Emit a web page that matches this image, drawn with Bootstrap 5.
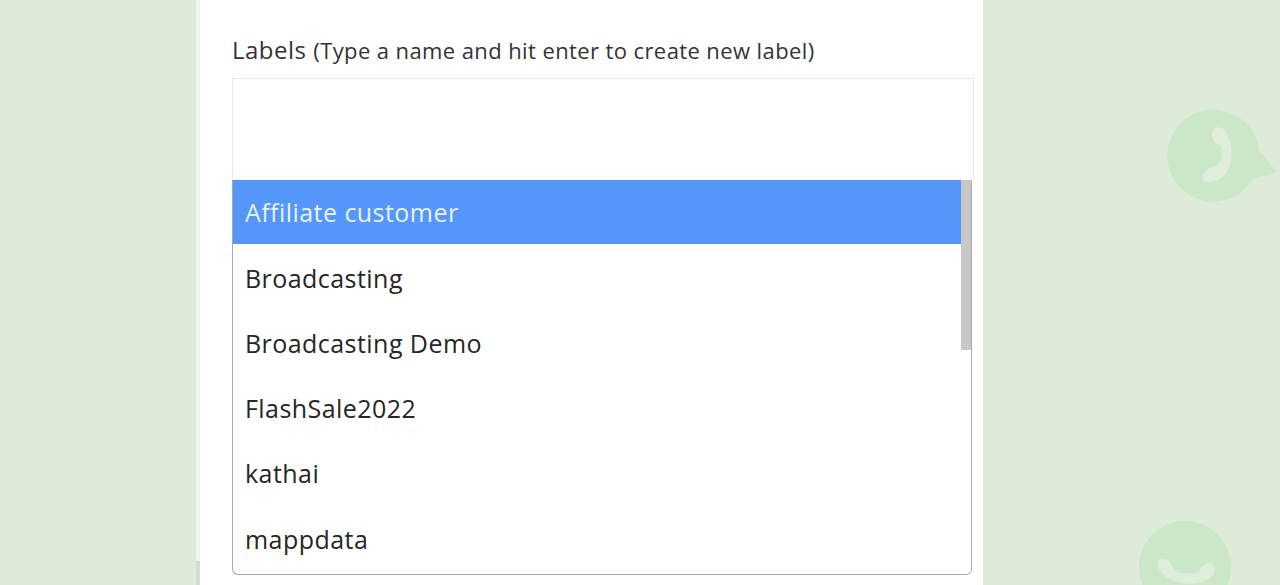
<!DOCTYPE html>
<html lang="en">
<head>
<meta charset="utf-8">
<title>Labels</title>
<link href="https://cdn.jsdelivr.net/npm/bootstrap@5.3.0/dist/css/bootstrap.min.css" rel="stylesheet">
<style>
html, body { height: 585px; overflow: hidden; }
body { background: #ddecd8; font-family: "Open Sans", "Noto Sans", "Liberation Sans", sans-serif; color: #2b2b2b; position: relative; }
.panel-sheet { position: relative; width: 787px; height: 585px; margin-left: 196px; background: #fff; border-left: 4px solid #f3f3f3; padding: 32px 9px 0 32px; }
.panel-sheet::before { content: ""; position: absolute; left: -4px; bottom: 0; width: 4px; height: 24px; background: #d8d8d8; }
.label-title { font-size: 24px; line-height: 36px; margin: 0 0 10px; letter-spacing: .5px; color: #333; display: block; }
.label-title span { font-size: 22px; letter-spacing: .4px; }
.tag-input { height: 102px; border: 1px solid #e8e8e8; border-bottom: 0; border-radius: 0; background: #fff; }
.tag-menu { width: 740px; height: 395px; border: 1px solid #a9a9a9; border-top: 0; border-radius: 0 0 6px 6px; overflow: hidden; }
.tag-list { border-radius: 0; }
.tag-list .list-group-item { height: 65.2px; border: 0; padding: 4px 12px 0; display: flex; align-items: center; font-size: 25px; color: #262626; border-radius: 0; letter-spacing: .45px; }
.tag-list .list-group-item.active { background: #5596fb; color: #e6f3ff; height: 64px; margin: 0; padding-top: 1px; }
.scroll-track { width: 10px; background: #fff; flex: none; }
.scroll-thumb { height: 170px; background: #c8c8c8; }
.bg-bubble { position: absolute; }
</style>
</head>
<body>
<svg class="bg-bubble bubble-one" style="left:1166px;top:107px" width="114" height="96" viewBox="0 0 114 96" aria-hidden="true">
  <path d="M93 43A46 46 0 1 0 87 72L111 65z" fill="#cbe6c9"/>
  <path d="M48 22C51 19 57 20 59 24C65 33 67 44 65 54C63 64 57 72 49 74C44 76 37 75 36 71C36 67 41 62 46 60C50 58 54 56 55 52C56 46 56 42 54 38C50 38 47 33 46 29C46 26 46 24 48 22Z" fill="#deeedb"/>
</svg>
<svg class="bg-bubble bubble-two" style="left:1138px;top:520px" width="96" height="65" viewBox="0 0 96 65" aria-hidden="true">
  <circle cx="47" cy="47" r="46" fill="#cbe6c9"/>
  <path d="M20 42C22 38 27 38 30 41C33 43 35 47 36 51C42 54 52 54 61 52C62 48 65 45 70 43C74 42 77 45 77 50C77 56 70 61 60 63C50 65 38 63 30 58C24 54 18 48 20 42Z" fill="#deeedb"/>
</svg>
<main class="panel-sheet">
  <form>
    <label class="form-label label-title" for="labelInput">Labels <span>(Type a name and hit enter to create new label)</span></label>
    <input id="labelInput" type="text" class="form-control tag-input">
    <div class="tag-menu d-flex">
      <div class="list-group tag-list flex-grow-1">
        <a href="#" class="list-group-item list-group-item-action active">Affiliate customer</a>
        <a href="#" class="list-group-item list-group-item-action">Broadcasting</a>
        <a href="#" class="list-group-item list-group-item-action">Broadcasting Demo</a>
        <a href="#" class="list-group-item list-group-item-action">FlashSale2022</a>
        <a href="#" class="list-group-item list-group-item-action">kathai</a>
        <a href="#" class="list-group-item list-group-item-action">mappdata</a>
      </div>
      <div class="scroll-track"><div class="scroll-thumb"></div></div>
    </div>
  </form>
</main>
<script src="https://cdn.jsdelivr.net/npm/bootstrap@5.3.0/dist/js/bootstrap.bundle.min.js"></script>
</body>
</html>
